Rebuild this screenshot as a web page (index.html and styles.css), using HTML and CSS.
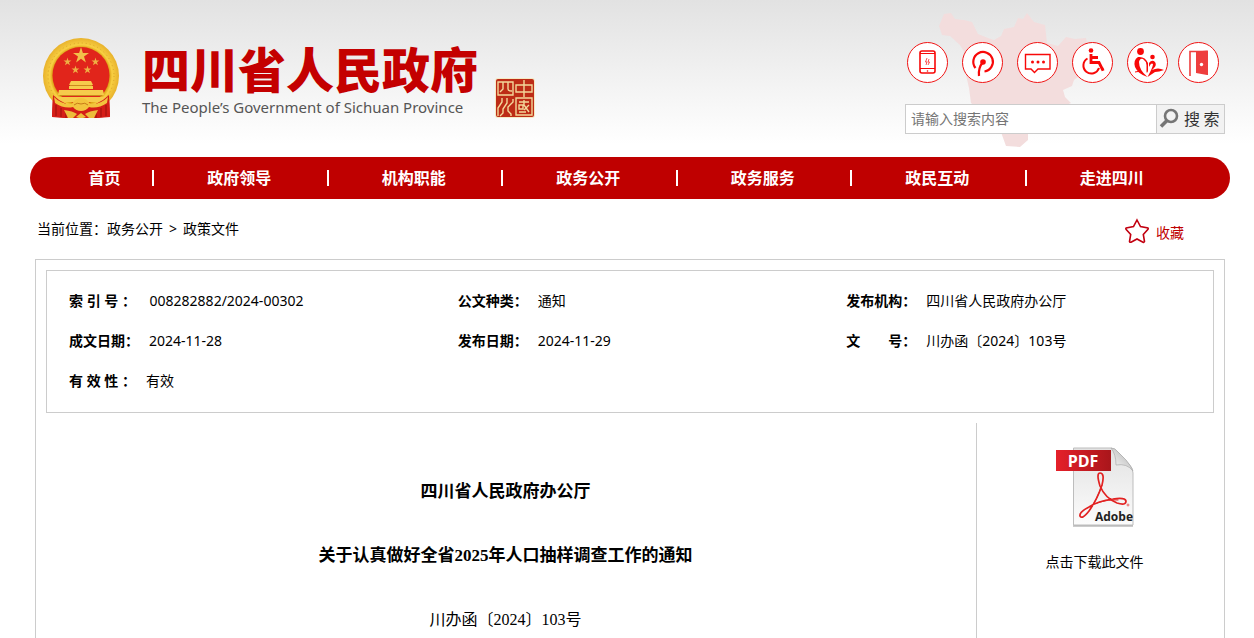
FILE: index.html
```html
<!DOCTYPE html>
<html lang="zh-CN">
<head>
<meta charset="utf-8">
<meta name="viewport" content="width=device-width, initial-scale=1">
<title>四川省人民政府</title>
<link rel="stylesheet" href="styles.css">
</head>
<body>
<header class="header">
  <div class="brand">
    <svg class="emblem" viewBox="0 0 78 82" aria-hidden="true">
      <defs>
        <radialGradient id="gold" cx="50%" cy="50%" r="50%">
          <stop offset=".74" stop-color="#d99a10"/><stop offset=".82" stop-color="#f8cf42"/><stop offset="1" stop-color="#e8b22c"/>
        </radialGradient>
      </defs>
      <path d="M11 58L10 79L22 81H56L68 79L67 58Z" fill="#cf1a14"/>
      <circle cx="39" cy="39" r="38" fill="url(#gold)"/>
      <circle cx="39" cy="39" r="33" fill="none" stroke="#dba52a" stroke-width="1" stroke-dasharray="1 3"/>
      <circle cx="39" cy="38.500" r="28.500" fill="#e1251b"/>
      <path d="M39 10L40.900 15.900L47 15.900L42 19.500L43.900 25.500L39 21.800L34.100 25.500L36 19.500L31 15.900L37.100 15.900Z" fill="#f2c14a"/>
      <g fill="#eeb044">
        <path d="M25.500 20.500L26.400 23.400H29.400L27 25.200L27.900 28.200L25.500 26.400L23 28.200L23.900 25.200L21.500 23.400H24.600Z"/>
        <path d="M53.500 20.500L54.400 23.400H57.400L55 25.200L55.900 28.200L53.500 26.400L51 28.200L51.900 25.200L49.500 23.400H52.600Z"/>
        <path d="M33.500 28.500L34.400 31.400H37.400L35 33.200L35.900 36.200L33.500 34.400L31 36.200L31.900 33.200L29.500 31.400H32.600Z"/>
        <path d="M45.500 28.500L46.400 31.400H49.400L47 33.200L47.900 36.200L45.500 34.400L43 36.200L43.900 33.200L41.500 31.400H44.600Z"/>
      </g>
      <path d="M29 44H49L51 48H27ZM27 49H51V52H27ZM17 53H61L62 58H16ZM13 60H65L62 65H16Z" fill="#f6cb4c"/>
      <path d="M28 48.500H50M18 58.500H60" stroke="#cc8b1d" stroke-width="1"/>
      <path d="M11 58Q22 69 39 70Q56 69 67 58L68 80Q55 81 48 81H30Q22 81 10 80Z" fill="#d51d17"/>
      <path d="M14 68V79M19 71V80M64 68V79M59 71V80M24 76V81M54 76V81" stroke="#9b100d" stroke-width="1"/>
      <path d="M12 60Q20 68 30 67Q33 61 39 61Q45 61 48 67Q58 68 66 60L65 66Q56 72 47 70Q44 74 39 74Q34 74 31 70Q22 72 13 66Z" fill="#f3c33d"/>
      <path d="M32 68Q35 65 39 67Q43 65 46 68" fill="none" stroke="#c77b18"/>
      <path d="M22 73Q31 74 35 77L31 81H26ZM56 73Q47 74 43 77L47 81H52ZM34 80L39 76L44 80L41 81H37Z" fill="#edbc3b"/>
    </svg>
    <div class="brand-text">
      <h1 class="brand-title">四川省人民政府</h1>
      <p class="brand-sub">The People’s Government of Sichuan Province</p>
    </div>
    <svg class="seal" viewBox="0 0 40 40" aria-hidden="true">
      <rect x="0" y="0" width="40" height="40" rx="3" fill="#f5eac4"/>
      <rect x="1" y="1" width="38" height="38" rx="2" fill="#bd2c16"/>
      <g fill="none" stroke="#f3d79a" stroke-width="1.400">
        <path d="M3 4V17H18V4ZM8 4V11L5 14M13 4V11Q13 13 17 13"/>
        <path d="M21 7H37V14H21ZM29 2V19"/>
        <path d="M7 20V24L3 30V38M12 20V25L8 31V35L5 38M18 21V24L13 29V33L16 36V38"/>
        <path d="M21 20H37V37H21ZM24 24H34M29 22V27L34 34M24 27H28V31H24ZM24 34H31M34 27L29 32"/>
      </g>
    </svg>
  </div>

  <div class="tools">
    <svg class="map" viewBox="0 0 170 157" aria-hidden="true">
      <path d="M9 26L14 14L21 13L25 19L34 20L42 22L48 34L58 38L64 40L71 36L74 29L84 27L88 18L93 19L97 13L104 22L115 25L117 43L128 46L136 37L145 39L156 38L158 48L153 60L152 74L144 80L142 86L133 90L135 97L141 103L130 108L112 116L98 128L98 140L90 147L76 146L72 135L68 118L52 112L41 103L39 88L36 75L38 58L30 45L20 36L12 35Z" fill="#f3dddd"/>
    </svg>
    <div class="quick">
      <nav class="quick-group" aria-label="快捷入口">
        <a class="quick-link" href="#" aria-label="手机版"><svg viewBox="1 1 39 39"><rect x="13" y="9" width="15" height="22" rx="2" stroke-width="1.600"/><path d="M13 11.500H28M13 26.500H28" stroke-width="1"/><path d="M20 16L18.500 20H20L19 23M22 17L21 20H22.500L21 23" stroke-width=".7"/><circle class="solid" cx="20.500" cy="29" r=".8"/></svg></a>
        <a class="quick-link" href="#" aria-label="微门户"><svg viewBox="1 1 39 39"><path d="M13.500 26A9.800 9.800 0 1 1 22.500 29.500M21 20Q16 26 17 34" stroke-width="2.200"/><circle class="solid" cx="21" cy="20" r="2.800"/></svg></a>
        <a class="quick-link" href="#" aria-label="互动留言"><svg viewBox="1 1 39 39"><path d="M8.500 12.500H33V27H21L17.500 30.500L14 27H8.500Z" stroke-width="1.400"/><g class="solid"><circle cx="15.500" cy="20" r="1.500"/><circle cx="21" cy="20" r="1.500"/><circle cx="26.500" cy="20" r="1.500"/></g></svg></a>
        <a class="quick-link" href="#" aria-label="无障碍"><svg viewBox="1 1 39 39"><circle class="solid" cx="19" cy="8.500" r="2.300"/><path d="M19 12V20.500H27L30.500 27.500L32 27M19 15.500H26" stroke-width="2.800"/><path d="M15.500 16.500A8 8 0 1 0 27 26" stroke-width="2"/></svg></a>
        <a class="quick-link" href="#" aria-label="关怀版"><svg viewBox="1 1 39 39"><circle class="solid" cx="13.500" cy="9.500" r="3.400"/><circle class="solid" cx="25.500" cy="15" r="2.300"/><path class="solid" d="M11 15Q6 18 8 25Q11 32 20.500 35Q12 28 12 20Q13 16 16 17Q19 19 19.500 23V30Q20 32 21 29V21Q18 14 11 15Z"/><path class="solid" d="M22 21Q25 17 28 20Q30 23 27 26L25 28Q31 25 37 28Q32 30 28 30L20.500 35Q26 25 26 22Q24 20 22 25Z"/><path d="M8 30Q11 29 14 30" stroke-width="1"/></svg></a>
      </nav>
      <a class="quick-link" href="#" aria-label="登录"><svg viewBox="1 1 39 39"><path class="door" d="M12 34V9.500H29"/><path d="M18 9.500L30 8.500V33H29L18 31Z" fill="#ee3e3e"/><circle cx="23.500" cy="22.500" r="1.700" fill="#fff"/></svg></a>
    </div>
    <form class="search" role="search">
      <input class="search-input" type="search" aria-label="搜索内容" placeholder="请输入搜索内容">
      <button class="search-button" type="submit"><svg viewBox="0 0 20 20" aria-hidden="true"><circle cx="12" cy="8" r="6"/><path d="M8 12.500L2 18.500" stroke-width="3.600"/></svg><span>搜 索</span></button>
    </form>
  </div>
</header>

<nav class="nav" aria-label="主导航">
  <a href="#">首页</a>
  <a href="#">政府领导</a>
  <a href="#">机构职能</a>
  <a href="#">政务公开</a>
  <a href="#">政务服务</a>
  <a href="#">政民互动</a>
  <a href="#">走进四川</a>
</nav>

<div class="location">
  <div class="crumbs">当前位置：<a href="#">政务公开</a><span class="crumb-arrow">&gt;</span><a href="#">政策文件</a></div>
  <a class="favorite" href="#"><svg viewBox="0 0 26 26" aria-hidden="true"><path d="M13 2L16.500 8.600L24 10Q24.500 10.500 24 11.300L19.300 16.500L20.500 23.500Q20 24.600 19 24.200L13 21L7 24.200Q5.800 24.600 5.500 23.500L6.700 16.500L2 11.300Q1.500 10.500 2.200 10L9.500 8.600Z"/></svg><span>收藏</span></a>
</div>

<main class="main">
  <dl class="info">
    <div><dt>索 引 号 ：</dt><dd>&nbsp;008282882/2024-00302</dd></div>
    <div><dt>公文种类：</dt><dd>通知</dd></div>
    <div><dt>发布机构：</dt><dd>四川省人民政府办公厅</dd></div>
    <div><dt>成文日期：</dt><dd>2024-11-28</dd></div>
    <div><dt>发布日期：</dt><dd>2024-11-29</dd></div>
    <div><dt>文　　号：</dt><dd>川办函〔2024〕103号</dd></div>
    <div><dt>有 效 性 ：</dt><dd>有效</dd></div>
  </dl>
  <div class="document">
    <article class="article">
      <h2>四川省人民政府办公厅</h2>
      <h2>关于认真做好全省2025年人口抽样调查工作的通知</h2>
      <p>川办函〔2024〕103号</p>
    </article>
    <aside class="download">
      <a href="#">
        <svg class="pdf" viewBox="0 0 80 82" aria-hidden="true">
          <defs>
            <linearGradient id="paper" x1="0" y1="0" x2="0" y2="1"><stop stop-color="#e2e2e2"/><stop offset="1" stop-color="#fcfcfc"/></linearGradient>
            <linearGradient id="tab"><stop stop-color="#e5202a"/><stop offset="1" stop-color="#a9161b"/></linearGradient>
            <linearGradient id="fold" x1="0" y1="1" x2="1" y2="0"><stop stop-color="#fff"/><stop offset="1" stop-color="#aaa"/></linearGradient>
          </defs>
          <path d="M18.500 2H56Q60 2 64 7L74 18Q78 22 78 27V79H18.500Z" fill="url(#paper)" stroke="#bdbdbd"/>
          <path d="M18 80H78" stroke="#999"/>
          <path d="M56 2Q61 8 61 19Q72 17 78 25Q76 20 71 14L63 6Q60 2 56 2Z" fill="url(#fold)" stroke="#aaa" stroke-width=".7"/>
          <path d="M1 4H56V25H1Z" fill="url(#tab)"/>
          <g fill="none" stroke="#e22222" stroke-linecap="round">
            <path d="M45 27Q41 27 45 40Q50 52 62 57Q71 60 71 55Q70 51 58 53Q43 55 34 61Q24 66 25 70Q27 74 34 65Q42 54 47 39Q50 27 45 27" stroke-width="1.700"/>
            <path d="M47 39Q42 54 34 65M42 57Q54 53 63 54" stroke-width="1"/>
          </g>
          <circle cx="73" cy="59" r="1" fill="none" stroke="#e22222" stroke-width=".6"/>
          <text class="pdf-tab" x="28" y="21">PDF</text>
          <text class="pdf-brand" x="59" y="75">Adobe</text>
        </svg>
        <span>点击下载此文件</span>
      </a>
    </aside>
  </div>
</main>
</body>
</html>
```
FILE: styles.css
```css
* {
  box-sizing: border-box;
}

body {
  margin: 0;
  min-height: 100vh;
  padding: 0 24px 0 30px;
  display: flex;
  flex-direction: column;
  font: 14px/20px "Noto Sans", "Noto Sans CJK SC", sans-serif;
  color: #000;
  background: #fff linear-gradient(#e2e2e2, #fff 144px) no-repeat;
}

a {
  color: inherit;
  text-decoration: none;
}

svg {
  display: block;
}

h1, h2, p, dl, dd {
  margin: 0;
}

.header {
  display: flex;
  justify-content: space-between;
  padding: 37px 5px 23px 12px;
}

.brand {
  display: flex;
  align-items: flex-start;
}

.emblem {
  width: 78px;
  height: 82px;
}

.brand-text {
  padding: 6px 17px 0 22px;
}

.brand-title {
  font: 900 48px/48px "Noto Sans CJK SC", sans-serif;
  color: #c40000;
}

.brand-sub {
  margin-top: 4px;
  font-size: 15px;
  line-height: 24px;
  color: #555;
}

.seal {
  width: 40px;
  height: 40px;
  margin-top: 41px;
}

.tools {
  position: relative;
  width: 320px;
  padding-top: 5px;
}

.map {
  position: absolute;
  left: 25px;
  top: -37px;
  width: 170px;
  height: 157px;
}

.quick,
.quick-group {
  position: relative;
  display: flex;
}

.quick {
  gap: 10px;
  padding-left: 2px;
}

.quick-group {
  gap: 14px;
}

.quick-link {
  width: 41px;
  height: 41px;
  border: 1px solid #f01414;
  border-radius: 50%;
  background: #fff;
}

.quick-link svg {
  width: 100%;
  height: 100%;
  fill: none;
  stroke: #f80808;
}

.quick-link .solid {
  fill: #f80808;
  stroke: none;
}

.quick-link .door {
  stroke: #ee3e3e;
  stroke-width: 1.6;
}

.quick-link [fill] {
  stroke: none;
}

.search {
  position: relative;
  display: flex;
  height: 30px;
  margin-top: 21px;
  border: 1px solid #ccc;
}

.search-input {
  flex: 1;
  min-width: 0;
  padding: 0 5px;
  border: 0;
  background: #fff;
  font: inherit;
}

.search-input::placeholder {
  color: #757575;
}

.search-button {
  display: flex;
  align-items: center;
  gap: 5px;
  width: 68px;
  padding: 0 0 2px 2px;
  border: 0;
  border-left: 1px solid #ccc;
  background: #f2f2f2;
  font: 16px/20px "Noto Sans CJK SC", sans-serif;
  color: #333;
  white-space: nowrap;
}

.search-button svg {
  flex: none;
  width: 20px;
  height: 20px;
  fill: none;
  stroke: #757575;
  stroke-width: 2.6;
}

.nav {
  display: grid;
  grid-template-columns: 95px repeat(6, 1fr);
  padding: 0 31px 0 27px;
  border-radius: 21px;
  background: #bf0000;
  color: #fff;
  font-size: 16px;
  font-weight: bold;
  line-height: 42px;
  text-align: center;
}

.nav a {
  display: flex;
  align-items: center;
  justify-content: center;
}

.nav a + a {
  justify-content: space-between;
}

.nav a + a::before,
.nav a + a::after {
  content: "";
  width: 2px;
  height: 16px;
}

.nav a + a::before {
  background: #fff;
}

.location {
  display: flex;
  justify-content: space-between;
  align-items: center;
  height: 60px;
  padding: 0 46px 0 7px;
}

.crumb-arrow {
  padding: 0 6px;
}

.favorite {
  display: flex;
  align-items: center;
  gap: 6px;
  padding-top: 4px;
  color: #bf0000;
}

.favorite span {
  padding-top: 4px;
}

.favorite svg {
  width: 26px;
  height: 26px;
  fill: none;
  stroke: #c20010;
  stroke-width: 1.6;
}

.main {
  flex: 1;
  display: flex;
  flex-direction: column;
  gap: 10px;
  margin: 0 5px;
  padding: 10px 10px 0;
  border: 1px solid #ccc;
  border-bottom: 0;
}

.info {
  display: grid;
  grid-template-columns: repeat(3, 1fr);
  padding: 10px 0 11px;
  border: 1px solid #ccc;
  line-height: 40px;
}

.info div {
  display: flex;
  gap: 10px;
  padding-left: 22px;
}

.info dt {
  font-weight: bold;
}

.document {
  flex: 1;
  display: flex;
}

.article {
  flex: 1;
  display: flex;
  flex-direction: column;
  gap: 32px;
  padding: 53px 11px 0 0;
  text-align: center;
  line-height: 32px;
  font-family: "Liberation Serif", "Noto Sans CJK SC", serif;
}

.article h2 {
  font-size: 17px;
}

.article p {
  font-size: 16px;
}

.download {
  width: 238px;
  padding: 23px 2px 0 0;
  border-left: 1px solid #ccc;
}

.download a {
  display: flex;
  flex-direction: column;
  align-items: center;
  gap: 24px;
}

.pdf {
  width: 80px;
  height: 82px;
}

.pdf-tab,
.pdf-brand {
  text-anchor: middle;
  font: bold 16px "Open Sans", sans-serif;
  fill: #fff;
}

.pdf-brand {
  font: bold 12px "Open Sans", sans-serif;
  fill: #222;
}
```
